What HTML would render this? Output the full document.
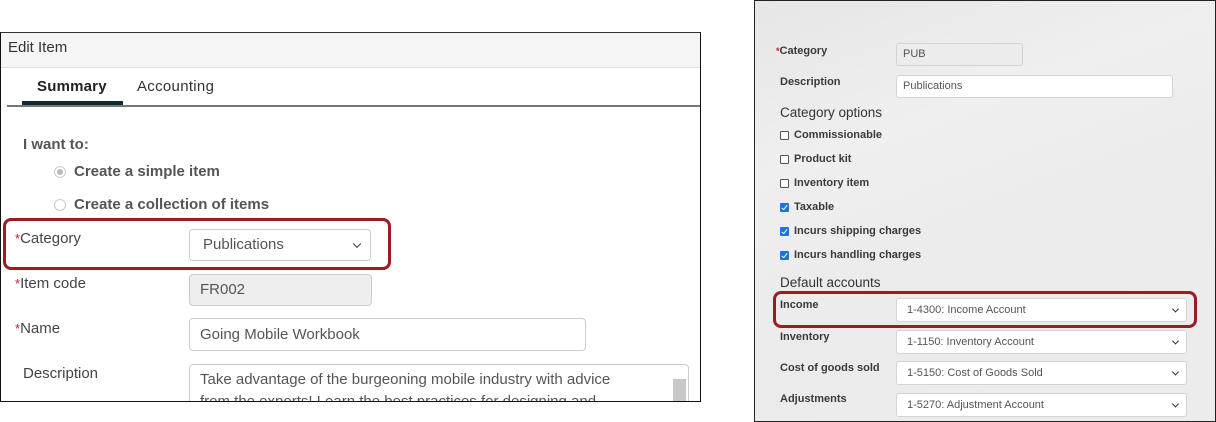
<!DOCTYPE html>
<html><head><style>
*{margin:0;padding:0;box-sizing:border-box}
body{width:1216px;height:422px;background:#fff;position:relative;overflow:hidden;font-family:"Liberation Sans",sans-serif}
.a{position:absolute;white-space:nowrap}
#L{position:absolute;left:0;top:32px;width:701px;height:370px;border:1px solid #111;border-top:1px solid #333;overflow:hidden;background:#fff}
#R{position:absolute;left:754px;top:0;width:462px;height:422px;border:1px solid #222;background:linear-gradient(160deg,#e6e6e6 0%,#efefef 30%,#ebebeb 60%,#ececec 100%);overflow:hidden}
.lab{color:#444;font-size:15px}
.st{color:#b3202a;font-size:13px}
.in{position:absolute;border:1px solid #ccc;border-radius:4px;background:#fff;color:#555;font-size:15px;padding-left:10px}
.rl{color:#3a3a3a;font-size:11px;font-weight:bold}
.ri{position:absolute;border:1px solid #d4d4d4;border-radius:3px;background:#fff;color:#555;font-size:11px;padding-left:6px}
.cb{position:absolute;left:25px;width:9px;height:9px;border:1px solid #555;background:#fff;border-radius:1px}
.cb.on{background:#1a73e8;border-color:#1a73e8}
.cb.on::after{content:"";position:absolute;left:2px;top:0px;width:2px;height:5px;border-right:1.5px solid #fff;border-bottom:1.5px solid #fff;transform:rotate(40deg)}
.chev{position:absolute;right:8px;top:50%;width:6px;height:6px;border-right:1.5px solid #333;border-bottom:1.5px solid #333;transform:translateY(-70%) rotate(45deg)}
.red{position:absolute;border:3px solid #9b1c23;border-radius:8px}
</style></head><body>
<div id="L">
 <div style="position:absolute;left:0;top:0;width:100%;height:35px;background:#f5f5f5;border-bottom:1px solid #ddd"></div>
 <div class="a" style="left:7px;top:6px;font-size:15px;color:#333">Edit Item</div>
 <div class="a" style="left:36px;top:45px;font-size:15px;color:#222;font-weight:bold;letter-spacing:0.2px">Summary</div>
 <div class="a" style="left:136px;top:45px;font-size:15px;color:#333;letter-spacing:0.3px">Accounting</div>
 <div style="position:absolute;left:21px;top:68px;width:101px;height:4px;background:#0f2a35"></div>
 <div style="position:absolute;left:6px;top:72px;width:700px;height:2px;background:#777"></div>
 <div class="a lab" style="left:22px;top:103px;color:#555;font-weight:bold">I want to:</div>
 <div class="a" style="left:53px;top:133px;width:12px;height:12px;border-radius:50%;border:1px solid #ccc;background:#fff"><div style="position:absolute;left:2px;top:2px;width:6px;height:6px;border-radius:50%;background:#bbb"></div></div>
 <div class="a lab" style="left:73px;top:130px;color:#555;font-weight:bold">Create a simple item</div>
 <div class="a" style="left:53px;top:166px;width:12px;height:12px;border-radius:50%;border:1px solid #ccc;background:#fff"></div>
 <div class="a lab" style="left:73px;top:163px;color:#555;font-weight:bold">Create a collection of items</div>
 <div class="red" style="left:2px;top:185px;width:388px;height:52px"></div>
 <div class="a lab" style="left:14px;top:197px"><span class="st">*</span>Category</div>
 <div class="in" style="left:188px;top:196px;width:182px;height:32px;line-height:30px;padding-left:13px">Publications<span class="chev" style="right:10px"></span></div>
 <div class="a lab" style="left:14px;top:242px"><span class="st">*</span>Item code</div>
 <div class="in" style="left:188px;top:241px;width:183px;height:32px;line-height:30px;background:#eee">FR002</div>
 <div class="a lab" style="left:14px;top:287px"><span class="st">*</span>Name</div>
 <div class="in" style="left:188px;top:285px;width:397px;height:33px;line-height:31px">Going Mobile Workbook</div>
 <div class="a lab" style="left:22px;top:332px">Description</div>
 <div class="in" style="left:188px;top:331px;width:500px;height:60px;line-height:22px;padding-top:4px;white-space:normal;overflow:hidden">Take advantage of the burgeoning mobile industry with advice<br>from the experts! Learn the best practices for designing and</div>
 <div style="position:absolute;left:672px;top:346px;width:13px;height:30px;background:#c8c8c8"></div>
</div>
<div id="R">
 <div class="a rl" style="left:21px;top:44px"><span class="st" style="font-size:9px">*</span>Category</div>
 <div class="ri" style="left:141px;top:42px;width:127px;height:23px;line-height:21px;background:#ececec">PUB</div>
 <div class="a rl" style="left:25px;top:75px">Description</div>
 <div class="ri" style="left:141px;top:74px;width:277px;height:23px;line-height:21px">Publications</div>
 <div class="a" style="left:25px;top:104px;font-size:13.5px;color:#333">Category options</div>
 <div class="cb" style="top:130px"></div><div class="a rl" style="left:39px;top:128px">Commissionable</div>
 <div class="cb" style="top:154px"></div><div class="a rl" style="left:39px;top:152px">Product kit</div>
 <div class="cb" style="top:178px"></div><div class="a rl" style="left:39px;top:176px">Inventory item</div>
 <div class="cb on" style="top:202px"></div><div class="a rl" style="left:39px;top:200px">Taxable</div>
 <div class="cb on" style="top:226px"></div><div class="a rl" style="left:39px;top:224px">Incurs shipping charges</div>
 <div class="cb on" style="top:250px"></div><div class="a rl" style="left:39px;top:248px">Incurs handling charges</div>
 <div class="a" style="left:25px;top:274px;font-size:13.5px;color:#333">Default accounts</div>
 <div class="red" style="left:18px;top:290px;width:424px;height:37px"></div>
 <div class="a rl" style="left:25px;top:298px">Income</div>
 <div class="ri" style="left:141px;top:297px;width:291px;height:24px;line-height:22px;padding-left:10px">1-4300: Income Account<span class="chev" style="width:5px;height:5px"></span></div>
 <div class="a rl" style="left:25px;top:330px">Inventory</div>
 <div class="ri" style="left:141px;top:329px;width:291px;height:24px;line-height:22px;padding-left:10px">1-1150: Inventory Account<span class="chev" style="width:5px;height:5px"></span></div>
 <div class="a rl" style="left:25px;top:361px">Cost of goods sold</div>
 <div class="ri" style="left:141px;top:360px;width:291px;height:24px;line-height:22px;padding-left:10px">1-5150: Cost of Goods Sold<span class="chev" style="width:5px;height:5px"></span></div>
 <div class="a rl" style="left:25px;top:392px">Adjustments</div>
 <div class="ri" style="left:141px;top:392px;width:291px;height:24px;line-height:22px;padding-left:10px">1-5270: Adjustment Account<span class="chev" style="width:5px;height:5px"></span></div>
</div>
</body></html>
